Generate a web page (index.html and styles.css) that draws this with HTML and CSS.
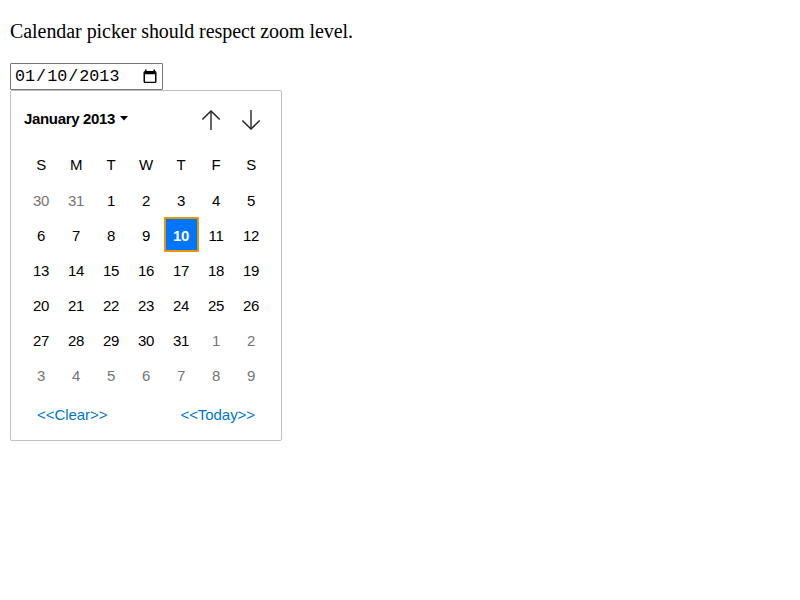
FILE: index.html
```
<!DOCTYPE html>
<html lang="en">
<head>
<meta charset="utf-8">
<title>Calendar picker</title>
<link rel="stylesheet" href="styles.css">
</head>
<body>
<p class="intro">Calendar picker should respect zoom level.</p>
<div class="date-field">
  <span class="date-value"><span>01</span><span class="slash">/</span><span>10</span><span class="slash">/</span><span>2013</span></span>
  <svg class="date-icon" width="16" height="16" viewBox="0 0 16 16"><path fill="#000" fill-rule="evenodd" d="M3 .5h1.500V2h7V.5H13V2q1.500 0 1.500 1.500v9q0 1.500-1.500 1.500H3q-1.500 0-1.500-1.500v-9Q1.500 2 3 2zM3 5.300v7.400h10V5.300z"/></svg>
</div>
<div class="picker">
  <div class="picker-header">
    <span class="month">January 2013</span>
    <svg class="caret" width="8" height="5" viewBox="0 0 8 5"><path d="M0 0h8L4 4.500z"/></svg>
    <svg class="arrow" width="20" height="22" viewBox="0 0 20 22"><path class="shaft" d="M10 21V2"/><path d="M1.300 10.500L10 2l8.700 8.500"/></svg>
    <svg class="arrow arrow-down" width="20" height="22" viewBox="0 0 20 22"><path class="shaft" d="M10 1v19"/><path d="M1.300 11.500L10 20l8.700-8.500"/></svg>
  </div>
  <div class="weekdays"><span>S</span><span>M</span><span>T</span><span>W</span><span>T</span><span>F</span><span>S</span></div>
  <div class="days">
    <span class="out">30</span><span class="out">31</span><span>1</span><span>2</span><span>3</span><span>4</span><span>5</span>
    <span>6</span><span>7</span><span>8</span><span>9</span><span class="selected">10</span><span>11</span><span>12</span>
    <span>13</span><span>14</span><span>15</span><span>16</span><span>17</span><span>18</span><span>19</span>
    <span>20</span><span>21</span><span>22</span><span>23</span><span>24</span><span>25</span><span>26</span>
    <span>27</span><span>28</span><span>29</span><span>30</span><span>31</span><span class="out">1</span><span class="out">2</span>
    <span class="out">3</span><span class="out">4</span><span class="out">5</span><span class="out">6</span><span class="out">7</span><span class="out">8</span><span class="out">9</span>
  </div>
  <div class="actions"><span>&lt;&lt;Clear&gt;&gt;</span><span>&lt;&lt;Today&gt;&gt;</span></div>
</div>
</body>
</html>
```
FILE: styles.css
```
* { box-sizing: border-box; }
body { margin: 0; padding: 20px 10px; background: #fff; color: #000; font-family: "Liberation Serif", serif; }
.intro { margin: 0; height: 43px; font-size: 20px; line-height: 22px; letter-spacing: -0.06px; }
.date-field { display: flex; align-items: center; justify-content: space-between; width: 153px; height: 27px; padding: 0 4px; border: 1px solid #767676; border-radius: 1px; font: 16.667px/25px "Liberation Mono", monospace; }
.date-value { display: flex; letter-spacing: 0.05px; }
.slash { padding: 0 1px; }
.picker { width: 272px; height: 351px; border: 1px solid #bfbfbf; border-radius: 2px; font: 15px/35px "Liberation Sans", sans-serif; letter-spacing: -0.4px; }
.picker-header { display: flex; align-items: center; height: 56px; padding: 0 20px 0 13px; }
.month { margin-top: -1px; font-weight: bold; letter-spacing: -0.33px; }
.caret { margin: -2px 0 0 5px; }
.arrow { margin: 2px 0 0 auto; fill: none; stroke: #222; stroke-width: 1.5; }
.arrow .shaft { stroke: #666; stroke-width: 2; }
.arrow-down { margin-left: 20px; }
.weekdays, .days { display: grid; grid-template-columns: repeat(7, 35px); grid-auto-rows: 35px; margin-left: 13px; text-align: center; }
.weekdays span, .days span { padding-right: 1px; }
.days span { line-height: 37px; }
.out { color: #757575; }
.days .selected { border: 2px solid #e59700; border-radius: 1px; background: #0075ff; color: #fff; font-weight: bold; line-height: 33px; }
.actions { display: flex; justify-content: space-between; padding: 5px 26px; color: #0077cc; letter-spacing: -0.06px; }
```
